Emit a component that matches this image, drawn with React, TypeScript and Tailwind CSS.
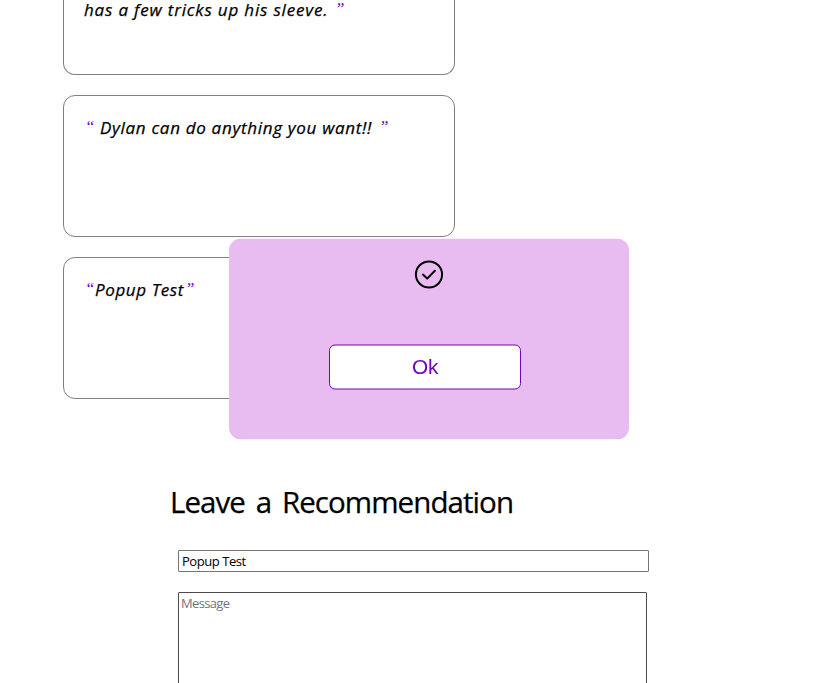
import type { ReactNode } from "react";

function Quote({ children }: { children: string }) {
  return (
    <span className="mt-[2px] block w-[10px] font-[family-name:'Liberation_Serif',serif] text-[17px] font-normal leading-none tracking-normal text-[#7700bb] [-webkit-text-stroke:0px]">
      {children}
    </span>
  );
}

function Card({ children }: { children: ReactNode }) {
  return (
    <article className="flex h-[142px] w-[392px] items-start rounded-[12px] border border-[#808080] pl-[21px] pt-5 text-[17px] italic leading-6 whitespace-pre [-webkit-text-stroke:0.25px_black]">
      {children}
    </article>
  );
}

function Popup() {
  return (
    <div
      role="dialog"
      className="absolute left-[229px] top-[239px] flex h-[201px] w-[400px] translate-y-[-0.5px] flex-col items-center rounded-[12px] bg-[#e8bcf0] pt-[21px] will-change-transform"
    >
      <svg width="30" height="30" viewBox="0 0 30 30" fill="none" stroke="black" strokeWidth="2">
        <circle cx="15" cy="15" r="13.1" />
        <path d="M8.9 15.1 13.2 19.1 20.9 11.2" strokeLinecap="round" strokeLinejoin="round" />
      </svg>
      <button className="mr-2 mt-[55px] h-[45px] w-[192px] rounded-[6px] border border-[#7700bb] bg-white pb-[2px] font-[family-name:'Liberation_Sans',Arial,sans-serif] text-[20.8px] leading-6 tracking-[-0.3px] text-[#7700bb]">
        Ok
      </button>
    </div>
  );
}

export default function App() {
  return (
    <main className="relative h-[683px] w-[820px] overflow-hidden bg-white font-[family-name:'Trebuchet_MS','Open_Sans',sans-serif] text-black">
      <section className="ml-[63px] flex flex-col gap-5">
        <article className="flex h-[75px] w-[392px] items-start rounded-b-[12px] border border-t-0 border-[#808080] pl-5 text-[17px] italic leading-5 whitespace-pre [-webkit-text-stroke:0.25px_black]">
          <span className="w-[251px] tracking-[0.82px]">has a few tricks up his sleeve.</span>
          <div className="-mt-[2px]"><Quote>”</Quote></div>
        </article>
        <Card>
          <Quote>“</Quote>
          <span className="ml-[5px] w-[279px] tracking-[0.69px]">Dylan can do anything you want!!</span>
          <Quote>”</Quote>
        </Card>
        <Card>
          <Quote>“</Quote>
          <span className="w-[90px] tracking-[0.6px]">Popup Test</span>
          <Quote>”</Quote>
        </Card>
      </section>
      <section className="ml-[170px] mt-[82px]">
        <h2 className="h-[44px] whitespace-nowrap text-[29.5px] leading-[42px] tracking-[-0.93px] [word-spacing:4px] [-webkit-text-stroke:0.25px_black]">Leave a Recommendation</h2>
        <form className="ml-2 mt-[25px] flex flex-col gap-5">
          <input
            defaultValue="Popup Test"
            className="h-[22px] w-[471px] rounded-[1px] border border-[#767676] px-[3px] text-[13px] tracking-[-0.45px] outline-none"
          />
          <textarea
            placeholder="Message"
            className="h-[130px] w-[469px] resize-none rounded-[1px] border border-[#4c4c4c] px-[2px] pt-[2px] text-[13px] leading-[17px] tracking-[-0.65px] outline-none placeholder:text-[#757575]"
          />
        </form>
      </section>
      <Popup />
    </main>
  );
}
